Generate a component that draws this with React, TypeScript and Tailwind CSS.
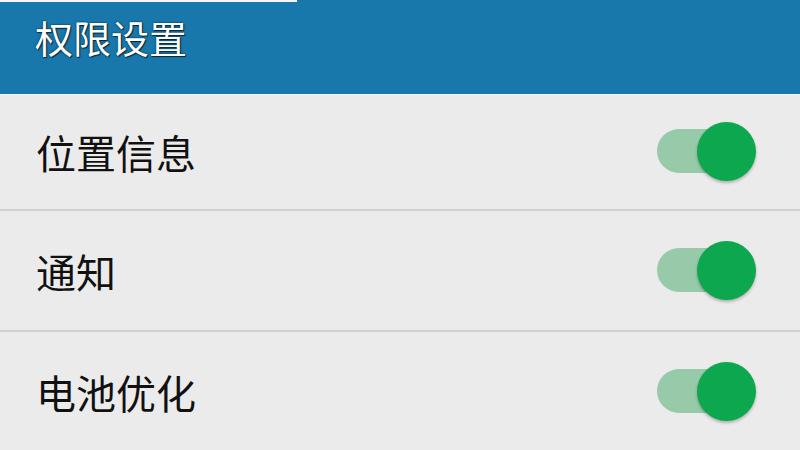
import { useState } from 'react';

const FONT = "font-['Noto_Sans_CJK_SC','Noto_Sans',sans-serif]";

interface Item {
  label: string;
  rowH: string;
}

const ITEMS: Item[] = [
  { label: '位置信息', rowH: 'h-[116px]' },
  { label: '通知', rowH: 'h-[121px]' },
  { label: '电池优化', rowH: 'h-[121px]' },
];

function Toggle({ on, onChange }: { on: boolean; onChange: () => void }) {
  return (
    <button
      onClick={onChange}
      className="relative w-[100px] h-[60px] shrink-0"
      aria-pressed={on}
    >
      {/* track */}
      <span
        className={`absolute left-0 top-[7px] w-[80px] h-[44px] rounded-full ${
          on ? 'bg-[#97caa9]' : 'bg-[#bdbdbd]'
        }`}
      />
      {/* knob */}
      <span
        className={`absolute top-0 w-[59px] h-[59px] rounded-full shadow-[0_2px_3px_rgba(0,0,0,0.25)] ${
          on ? 'left-[40px] bg-[#0ca74e]' : 'left-0 bg-[#f5f5f5]'
        }`}
      />
    </button>
  );
}

export default function App() {
  const [state, setState] = useState<boolean[]>([true, true, true]);

  return (
    <div className={`w-[800px] h-[450px] overflow-hidden bg-[#ebebeb] ${FONT}`}>
      <header className="relative h-[94px] bg-[#1878ac]">
        <div className="absolute left-0 top-0 w-[297px] h-[2px] bg-[#f4f4f4]" />
        <h1 className="pl-[35px] pt-[12px] text-[38px] leading-[50px] text-white [text-shadow:0_0_2px_rgba(0,0,0,0.8),1px_1px_1px_rgba(0,0,0,0.6)]">
          权限设置
        </h1>
      </header>
      <div className="h-px bg-[#f7f7f7]" />

      {ITEMS.map((item, i) => (
        <div
          key={item.label}
          className={`${item.rowH} flex items-center justify-between pl-[36px] pr-[43px] border-b-2 border-[#d0d0d0]`}
        >
          <span className="text-[40px] leading-none text-[#111] [text-shadow:0_0_1px_rgba(255,255,255,0.7)]">
            {item.label}
          </span>
          <Toggle
            on={state[i]}
            onChange={() => setState(s => s.map((v, j) => (j === i ? !v : v)))}
          />
        </div>
      ))}
    </div>
  );
}
